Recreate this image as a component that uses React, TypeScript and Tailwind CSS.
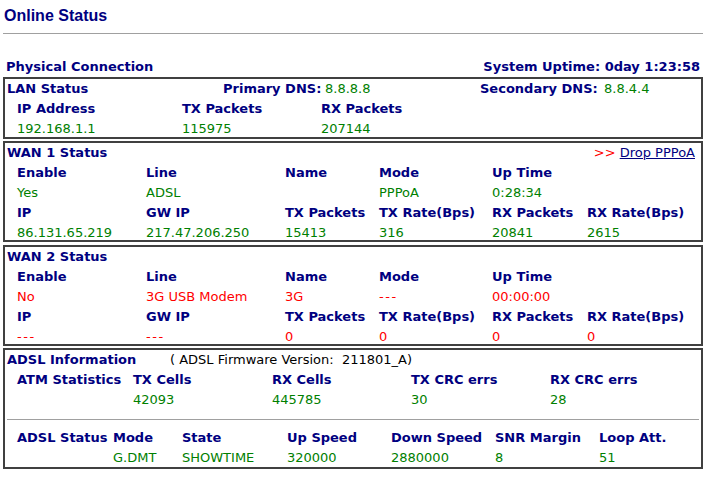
import React from 'react'

// ---------------------------------------------------------------------------
// Types / data
// ---------------------------------------------------------------------------

const WAN_COLS = ['w-[129px]', 'w-[139px]', 'w-[94px]', 'w-[113px]', 'w-[95px]', '']

const WAN1 = {
  head1: ['Enable', 'Line', 'Name', 'Mode', 'Up Time', ''],
  vals1: ['Yes', 'ADSL', '', 'PPPoA', '0:28:34', ''],
  head2: ['IP', 'GW IP', 'TX Packets', 'TX Rate(Bps)', 'RX Packets', 'RX Rate(Bps)'],
  vals2: ['86.131.65.219', '217.47.206.250', '15413', '316', '20841', '2615'],
}

const WAN2 = {
  head1: ['Enable', 'Line', 'Name', 'Mode', 'Up Time', ''],
  vals1: ['No', '3G USB Modem', '3G', '---', '00:00:00', ''],
  head2: ['IP', 'GW IP', 'TX Packets', 'TX Rate(Bps)', 'RX Packets', 'RX Rate(Bps)'],
  vals2: ['---', '---', '0', '0', '0', '0'],
}

const ATM_COLS = ['w-[116px]', 'w-[139px]', 'w-[139px]', 'w-[139px]', '']
const ADSL_COLS = ['w-[96px]', 'w-[69px]', 'w-[105px]', 'w-[104px]', 'w-[104px]', 'w-[104px]', '']

// ---------------------------------------------------------------------------
// Helpers
// ---------------------------------------------------------------------------

const label = 'font-bold text-[#000080]'

function Row({ cells, cols, tone }: { cells: string[]; cols: string[]; tone: string }) {
  return (
    <div className="flex h-5 items-center whitespace-nowrap pl-[12px] leading-5">
      {cells.map((c, i) => (
        <div key={i} className={`${cols[i]} shrink-0 ${tone} ${c === '---' ? 'tracking-[1.6px]' : ''}`}>
          {c}
        </div>
      ))}
    </div>
  )
}

function Box({ h, children }: { h: string; children: React.ReactNode }) {
  return <div className={`${h} border-2 border-[#404040]`}>{children}</div>
}

// ---------------------------------------------------------------------------
// Component
// ---------------------------------------------------------------------------

export default function App() {
  const green = 'text-[#008000]'
  const red = 'text-[#ff0000]'

  return (
    <div className="min-h-[478px] w-[712px] bg-white font-['DejaVu_Sans',Verdana,sans-serif] text-[13px]">
      <div className="w-[703px] pl-[3px]">
        {/* Title */}
        <div className="flex h-[31px] items-center pl-[1px] font-['Liberation_Sans',Arial,sans-serif] text-[16px] font-bold text-[#000080]">
          Online Status
        </div>
        <div className="mt-[2px] border-t border-[#a0a0a0]" />

        {/* Physical connection header */}
        <div className="mt-[23px] flex h-5 items-center justify-between whitespace-nowrap px-[3px] leading-5">
          <span className={label}>Physical Connection</span>
          <span className={label}>System Uptime: 0day 1:23:58</span>
        </div>

        {/* LAN */}
        <Box h="h-[62px]">
          <div className="flex h-5 items-center whitespace-nowrap pl-[2px] leading-5">
            <div className={`w-[216px] shrink-0 ${label}`}>LAN Status</div>
            <div className={`w-[102px] shrink-0 ${label}`}>Primary DNS:</div>
            <div className={`w-[155px] shrink-0 ${green}`}>8.8.8.8</div>
            <div className={`w-[124px] shrink-0 ${label}`}>Secondary DNS:</div>
            <div className={green}>8.8.4.4</div>
          </div>
          <Row cells={['IP Address', 'TX Packets', 'RX Packets']} cols={['w-[165px]', 'w-[139px]', '']} tone={label} />
          <Row cells={['192.168.1.1', '115975', '207144']} cols={['w-[165px]', 'w-[139px]', '']} tone={green} />
        </Box>

        {/* WAN 1 */}
        <div className="mt-[2px]">
          <Box h="h-[101px]">
            <div className="flex h-5 items-center justify-between whitespace-nowrap pl-[2px] pr-[6px] leading-5">
              <span className={label}>WAN 1 Status</span>
              <span>
                <span className={red}>&gt;&gt; </span>
                <a href="#" className="text-[#000080] underline">
                  Drop PPPoA
                </a>
              </span>
            </div>
            <Row cells={WAN1.head1} cols={WAN_COLS} tone={label} />
            <Row cells={WAN1.vals1} cols={WAN_COLS} tone={green} />
            <Row cells={WAN1.head2} cols={WAN_COLS} tone={label} />
            <Row cells={WAN1.vals2} cols={WAN_COLS} tone={green} />
          </Box>
        </div>

        {/* WAN 2 */}
        <div className="mt-[3px]">
          <Box h="h-[101px]">
            <div className="flex h-5 items-center whitespace-nowrap pl-[2px] leading-5">
              <span className={label}>WAN 2 Status</span>
            </div>
            <Row cells={WAN2.head1} cols={WAN_COLS} tone={label} />
            <Row cells={WAN2.vals1} cols={WAN_COLS} tone={red} />
            <Row cells={WAN2.head2} cols={WAN_COLS} tone={label} />
            <Row cells={WAN2.vals2} cols={WAN_COLS} tone={red} />
          </Box>
        </div>

        {/* ADSL */}
        <div className="mt-[2px]">
          <Box h="h-[121px]">
            <div className="flex h-5 items-center whitespace-nowrap pl-[2px] leading-5">
              <div className={`w-[163px] shrink-0 ${label}`}>ADSL Information</div>
              <div className="text-black">( ADSL Firmware Version:&nbsp;&nbsp;211801_A)</div>
            </div>
            <Row cells={['ATM Statistics', 'TX Cells', 'RX Cells', 'TX CRC errs', 'RX CRC errs']} cols={ATM_COLS} tone={label} />
            <Row cells={['', '42093', '445785', '30', '28']} cols={ATM_COLS} tone={green} />
            <div className="mx-[2px] mt-[9px] border-t border-[#a0a0a0]" />
            <div className="mt-[8px]">
              <Row
                cells={['ADSL Status', 'Mode', 'State', 'Up Speed', 'Down Speed', 'SNR Margin', 'Loop Att.']}
                cols={ADSL_COLS}
                tone={label}
              />
              <Row cells={['', 'G.DMT', 'SHOWTIME', '320000', '2880000', '8', '51']} cols={ADSL_COLS} tone={green} />
            </div>
          </Box>
        </div>
      </div>
    </div>
  )
}
